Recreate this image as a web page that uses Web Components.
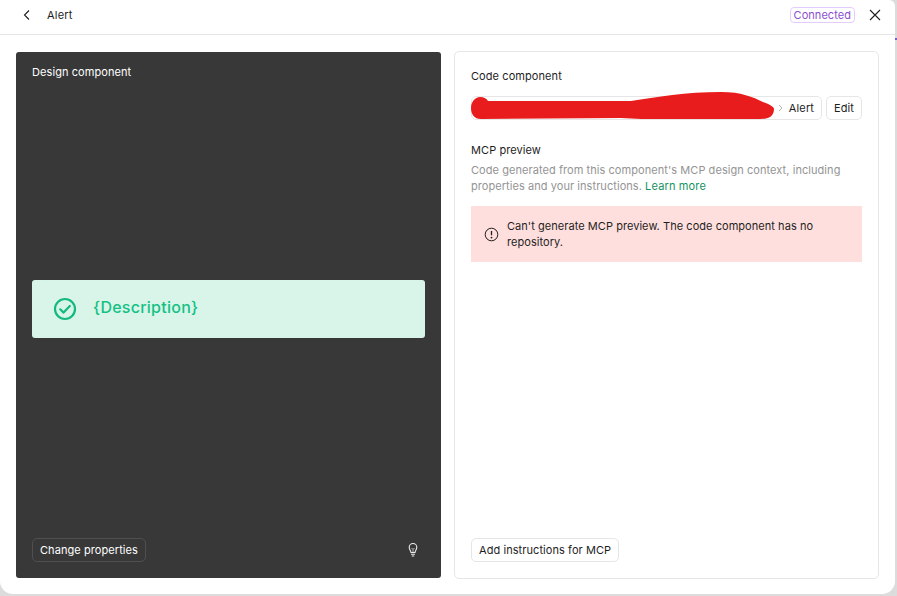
<!DOCTYPE html>
<html lang="en"><head><meta charset="utf-8"><title>Alert</title>
<style>
html,body{margin:0;padding:0;background:#dcdcdc;width:897px;height:596px;overflow:hidden}
body{font-family:Inter,"Liberation Sans",sans-serif;font-size:11px;color:#1e1e1e;position:relative}
.tick{position:absolute;left:895px;top:38px;width:2px;height:2px;background:#7b5cd0}
</style></head><body>
<app-window>
  <top-bar slot="top" title="Alert" status="Connected"></top-bar>
  <design-panel slot="left"></design-panel>
  <code-panel slot="right"></code-panel>
</app-window>
<div class="tick"></div>
<script>
function def(name,html){
  customElements.define(name,class extends HTMLElement{
    connectedCallback(){
      if(this.shadowRoot)return;
      const r=this.attachShadow({mode:'open'});
      r.innerHTML=typeof html==='function'?html(this):html;
    }
  });
}
def('app-window',`<style>
:host{display:flex;flex-direction:column;width:895px;height:594px;background:#fff;border-radius:0 6px 13px 13px;position:relative;overflow:hidden;box-sizing:border-box}
.body{flex:1;display:grid;grid-template-columns:425px 425px;column-gap:13px;padding:17px 18px 17px 16px;min-height:0}
</style>
<slot name="top"></slot>
<div class="body"><slot name="left"></slot><slot name="right"></slot></div>`);
def('top-bar',h=>`<style>
:host{display:flex;align-items:center;height:35px;box-sizing:border-box;border-bottom:1px solid #e6e6e6;padding:0 14px 4px 22px;font-size:11px;font-weight:400;color:#1e1e1e;letter-spacing:.2px}
svg{display:block}
.back{width:10px;height:12px;margin-right:15px}
.sp{flex:1}
.badge{border:1px solid #e4ccff;border-radius:4px;height:14px;line-height:14px;padding:0 3px;color:#8a4fd0;font-weight:400;margin-right:14px;letter-spacing:.05px}
</style>
<svg class="back" viewBox="0 0 10 12" fill="none" stroke="#1e1e1e" stroke-width="1.1"><path d="M7 1.500 2.500 6 7 10.500"/></svg>
<span>${h.getAttribute('title')}</span><span class="sp"></span>
<span class="badge">${h.getAttribute('status')}</span>
<svg width="12" height="12" viewBox="0 0 12 12" fill="none" stroke="#1e1e1e" stroke-width="1.1"><path d="M1 1 11 11M11 1 1 11"/></svg>`);
def('alert-sample',`<style>
:host{display:flex;align-items:center;height:58px;background:#d9f5ea;border-radius:3px;padding-left:21px;gap:16px;color:#14c184;font-size:16px;font-weight:500;letter-spacing:.25px}
span{position:relative;top:-2px}
svg{display:block;flex:none}
</style>
<svg width="24" height="24" viewBox="0 0 24 24" fill="none" stroke="#14b97e" stroke-width="2.2"><circle cx="12" cy="12" r="10"/><path d="M7.200 12.300 10.600 15.600 16.800 9" stroke-linecap="round" stroke-linejoin="round"/></svg>
<span>{Description}</span>`);
def('ui-button',`<style>
:host{display:inline-flex;align-items:center;height:24px;box-sizing:border-box;padding:0 7px;border:1px solid var(--bd,#e6e6e6);border-radius:5px;font-size:11px;font-weight:400;letter-spacing:.07px;color:var(--fg,#1e1e1e);background:var(--bg,#fff);white-space:nowrap}
</style><slot></slot>`);
def('design-panel',`<style>
:host{display:flex;flex-direction:column;height:526px;background:#383838;border-radius:3px;box-sizing:border-box;padding:14px 16px 16px;color:#fff;--fg:#fff;--bd:#4f4f4f;--bg:transparent}
.t{font-size:11px;font-weight:400;letter-spacing:.08px;line-height:13px}
.mid{flex:1;display:flex;flex-direction:column;justify-content:center;padding-top:1px}
.foot{display:flex;justify-content:space-between;align-items:center;padding-right:5px}
svg{display:block}
</style>
<div class="t">Design component</div>
<div class="mid"><alert-sample></alert-sample></div>
<div class="foot"><ui-button>Change properties</ui-button>
<svg width="14" height="16" viewBox="0 0 14 16" fill="none" stroke="#eeeeee" stroke-width="1.100"><path d="M5 10.500C5 8.800 3.200 7.800 3.200 5.300a3.800 3.800 0 0 1 7.600 0C10.800 7.800 9 8.800 9 10.500ZM5 12.300h4M5.800 14h2.400"/><path d="M5.500 6 7 7.500 8.500 6M7 7.500v3" stroke-width=".7"/></svg></div>`);
def('code-panel',`<style>
:host{display:flex;flex-direction:column;height:528px;margin-top:-1px;box-sizing:border-box;border:1px solid #e6e6e6;border-radius:5px;padding:17px 16px 16px;position:relative}
.h{font-size:11px;font-weight:400;letter-spacing:.08px;line-height:14px;color:#1e1e1e}
.row{display:flex;gap:4px;margin-top:13px;position:relative}
.path{flex:1;display:flex;align-items:center;justify-content:flex-end;height:24px;box-sizing:border-box;border:1px solid #e6e6e6;border-radius:5px;padding-right:7px;font-weight:400;letter-spacing:.14px}
.chev{margin-right:6px;display:block}
.scribble{position:absolute;left:0;top:-6px;width:306px;height:30px;pointer-events:none}
.mcp{margin-top:23px}
.d{color:#949494;line-height:16px;margin-top:5px;font-size:11px;letter-spacing:.06px}
.d a{color:#14935f;text-decoration:none;font-weight:400;letter-spacing:.14px}
.err{margin-top:12px;height:56px;box-sizing:border-box;background:#ffdfdd;display:flex;align-items:center;padding:0 28px 0 13px;gap:8px;line-height:16px;color:#1e1e1e;letter-spacing:.05px}
.err svg{flex:none;display:block}
.sp{flex:1}
.foot{display:flex}
</style>
<div class="h">Code component</div>
<div class="row">
  <div class="path"><svg class="chev" width="5" height="8" viewBox="0 0 5 8" fill="none" stroke="#b3b3b3"><path d="M1 1 4 4 1 7"/></svg>Alert</div>
  <ui-button>Edit</ui-button>
  <svg class="scribble" viewBox="0 0 306 30"><path fill="#e81c1c" d="M0 18C0 12 4 7 9 7C13 7 16 9 17 11L160 11C185 7 215 2 250 2C270 2 282 7 292 12C300 15 303 17 303 19C303 26 298 29 290 29L170 29L150 28L10 29C3 29 0 24 0 18Z"/></svg>
</div>
<div class="h mcp">MCP preview</div>
<div class="d"><div>Code generated from this component's MCP design context, including</div><div>properties and your instructions. <a>Learn more</a></div></div>
<div class="err"><svg width="15" height="15" viewBox="0 0 15 15" fill="none" stroke="#1e1e1e"><circle cx="7.500" cy="7.500" r="6.300"/><path d="M7.500 4v4.300" stroke-width="1.300"/><circle cx="7.500" cy="10.600" r=".9" fill="#1e1e1e" stroke="none"/></svg><span>Can't generate MCP preview. The code component has no repository.</span></div>
<div class="sp"></div>
<div class="foot"><ui-button>Add instructions for MCP</ui-button></div>`);
</script>
</body></html>
